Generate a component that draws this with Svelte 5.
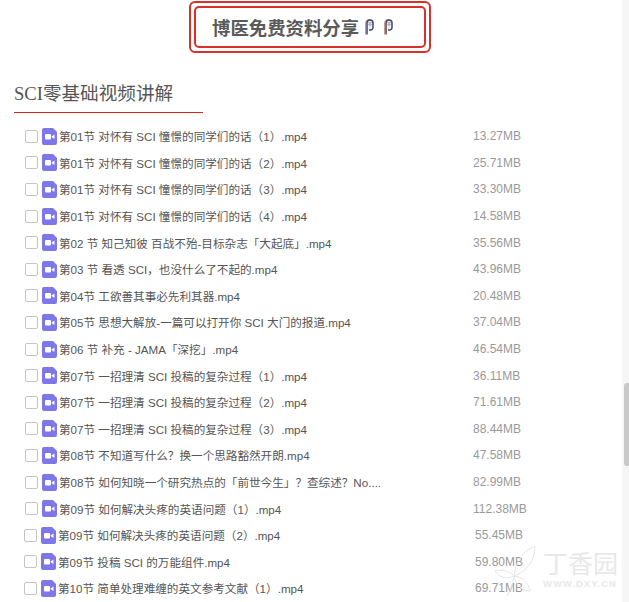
<script>
	const rows = [
		['第01节 对怀有 SCI 憧憬的同学们的话（1）.mp4', '13.27MB'],
		['第01节 对怀有 SCI 憧憬的同学们的话（2）.mp4', '25.71MB'],
		['第01节 对怀有 SCI 憧憬的同学们的话（3）.mp4', '33.30MB'],
		['第01节 对怀有 SCI 憧憬的同学们的话（4）.mp4', '14.58MB'],
		['第02 节 知己知彼 百战不殆-目标杂志「大起底」.mp4', '35.56MB'],
		['第03 节 看透 SCI，也没什么了不起的.mp4', '43.96MB'],
		['第04节 工欲善其事必先利其器.mp4', '20.48MB'],
		['第05节 思想大解放-一篇可以打开你 SCI 大门的报道.mp4', '37.04MB'],
		['第06 节 补充 - JAMA「深挖」.mp4', '46.54MB'],
		['第07节 一招理清 SCI 投稿的复杂过程（1）.mp4', '36.11MB'],
		['第07节 一招理清 SCI 投稿的复杂过程（2）.mp4', '71.61MB'],
		['第07节 一招理清 SCI 投稿的复杂过程（3）.mp4', '88.44MB'],
		['第08节 不知道写什么？换一个思路豁然开朗.mp4', '47.58MB'],
		['第08节 如何知晓一个研究热点的「前世今生」？查综述？No....', '82.99MB'],
		['第09节 如何解决头疼的英语问题（1）.mp4', '112.38MB'],
		['第09节 如何解决头疼的英语问题（2）.mp4', '55.45MB', true],
		['第09节 投稿 SCI 的万能组件.mp4', '59.80MB', true],
		['第10节 简单处理难缠的英文参考文献（1）.mp4', '69.71MB', true]
	];
</script>

{#snippet pin()}
	<svg width="10" height="18" viewBox="0 0 10 18">
		<path d="M1.5 16.5V5a3.5 3.5 0 0 1 6 -2.4" fill="none" stroke="#d39a78" stroke-width="1"/>
		<path d="M3 16.5V5a3 3 0 0 1 6 0v4.500a2.500 2.500 0 0 1-2.500 2.500H5" fill="#f1eee6" stroke="#3b4675" stroke-width="1.500"/>
		<path d="M4.500 4h1v1h-1zM6.500 4h1v1h-1zM5.500 5h1v1h-1zM4.500 6h1v1h-1zM6.500 6h1v1h-1zM5.500 7h1v1h-1z" fill="#7c86ad"/>
	</svg>
{/snippet}

<div class="page">
	<div class="banner-wrap">
		<div class="banner-outer">
			<div class="banner-inner">
				<span>博医免费资料分享</span>
				<span class="pins">
					{@render pin()}
					{@render pin()}
				</span>
			</div>
		</div>
	</div>

	<h2>SCI零基础视频讲解</h2>

	<ul>
		{#each rows as [name, size, shifted]}
			<li class:shifted>
				<span class="check"></span>
				<svg class="file" width="15" height="17" viewBox="0 0 15 17">
					<path d="M2 0h9l4 4v11a2 2 0 0 1-2 2H2a2 2 0 0 1-2-2V2a2 2 0 0 1 2-2z" fill="#7d77e8"/>
					<rect x="3" y="6" width="6" height="5.500" rx="1" fill="#fff"/>
					<path d="M9.500 8.500l3-2v4.500l-3-2z" fill="#fff"/>
				</svg>
				<span class="name">{name}</span>
				<span class="size">{size}</span>
			</li>
		{/each}
	</ul>

	<div class="scrollbar"><div class="thumb"></div></div>

	<div class="mark">
		<svg width="44" height="56" viewBox="0 0 44 56" fill="none" stroke="#e6e6e6" stroke-width="1">
			<path d="M20 30C22 14 30 4 41 0c0 14-8 26-21 30z"/>
			<path d="M20 30C14 24 6 23 1 25c4 6 11 9 19 5z"/>
			<path d="M20 30c-1 8-3 14-7 20"/>
			<path d="M20 30c8 1 15 7 16 15-8 0-14-6-16-15z"/>
		</svg>
		<div class="mark-text">
			<span class="mark-cn">丁香园</span>
			<span class="mark-en">WWW.DXY.CN</span>
		</div>
	</div>
</div>

<style>
	:global(body) {
		margin: 0;
		background: #fff;
	}

	.page {
		position: relative;
		width: 629px;
		height: 602px;
		overflow: hidden;
		font-family: "Liberation Sans", "Noto Sans CJK SC", sans-serif;
	}

	.banner-wrap {
		padding: 1px 0 0 189px;
		height: 79px;
		box-sizing: border-box;
	}

	.banner-outer {
		width: 242px;
		height: 52px;
		box-sizing: border-box;
		border: 2px solid #d9302a;
		border-radius: 6px;
		padding: 3px;
	}

	.banner-inner {
		height: 100%;
		box-sizing: border-box;
		border: 2px solid #d9302a;
		border-radius: 5px;
		display: flex;
		align-items: center;
		padding-left: 16px;
		gap: 5px;
		font-size: 18.4px;
		font-weight: 700;
		color: #5a5a5a;
	}

	.pins {
		display: flex;
		gap: 9px;
	}

	h2 {
		margin: 0 0 0 14px;
		width: 189px;
		height: 34px;
		box-sizing: border-box;
		border-bottom: 1px solid #e2231a;
		font-family: "Liberation Serif", "Noto Sans CJK SC", serif;
		font-size: 18.6px;
		line-height: 29px;
		font-weight: 400;
		color: #555;
		white-space: nowrap;
	}

	ul {
		list-style: none;
		margin: 0;
		padding: 10px 0 0 25px;
	}

	li {
		display: flex;
		align-items: center;
		height: 26.6px;
		color: #555;
	}

	.check {
		width: 11px;
		height: 11px;
		border: 1px solid #c4c4c4;
		border-radius: 2px;
		background: #fff;
		margin-right: 4px;
	}

	.file {
		flex: none;
		margin-right: 2px;
	}

	.name {
		width: 414px;
		flex: none;
		white-space: nowrap;
		font-size: 11.6px;
	}

	.size {
		font-size: 12px;
		color: #999;
	}

	.shifted {
		margin-left: -1px;
	}

	.shifted .size {
		margin-left: 3px;
	}

	.scrollbar {
		position: absolute;
		top: 0;
		right: 0;
		bottom: 0;
		width: 7px;
		background: #f6f6f6;
	}

	.thumb {
		position: absolute;
		top: 383px;
		left: 2px;
		right: 0;
		height: 83px;
		background: #c9c9c9;
		border-radius: 3px 0 0 3px;
	}

	.mark {
		position: absolute;
		left: 494px;
		top: 546px;
		display: flex;
		gap: 5px;
	}

	.mark-text {
		display: flex;
		flex-direction: column;
		color: #e8e8e8;
		padding-top: 4px;
	}

	.mark-cn {
		font-size: 25px;
		line-height: 29px;
	}

	.mark-en {
		font-size: 9.5px;
		font-weight: 700;
		letter-spacing: 1px;
		line-height: 10px;
	}
</style>
